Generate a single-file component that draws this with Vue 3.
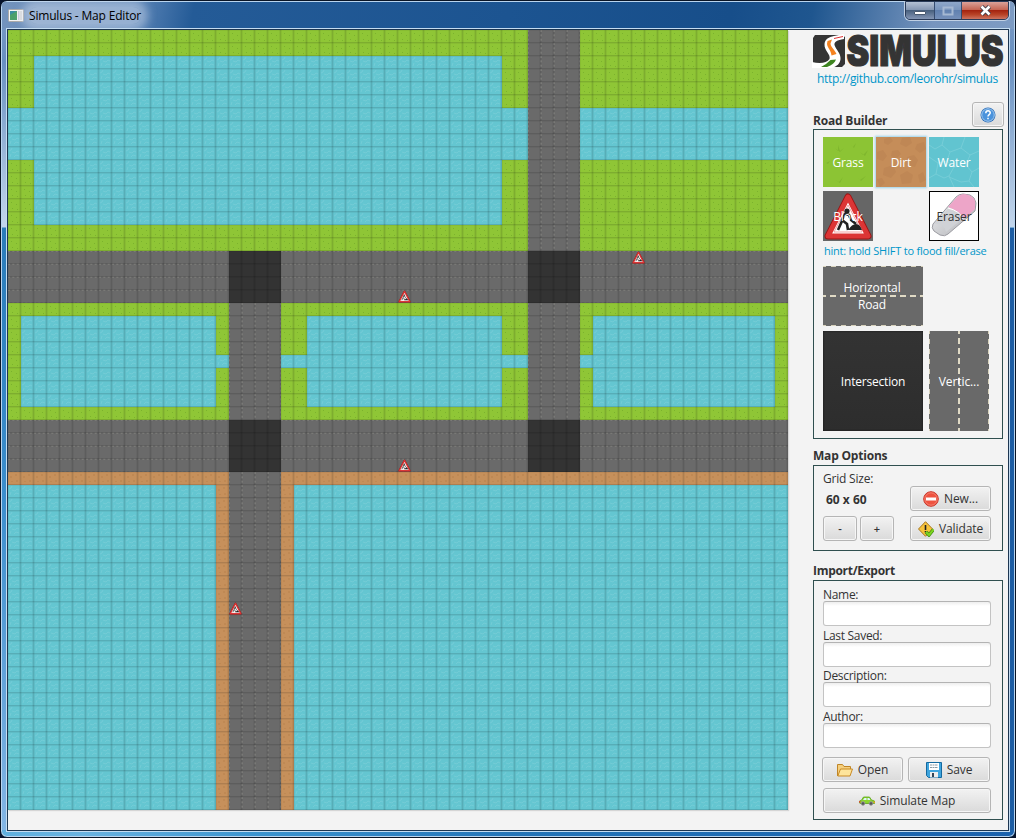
<script setup>
const T = 13
const areas = [
  ['grass', 0, 0, 60, 34],
  ['water', 2, 2, 36, 13],
  ['water', 0, 6, 60, 4],
  ['water', 1, 22, 15, 7],
  ['water', 23, 22, 15, 7],
  ['water', 45, 22, 14, 7],
  ['water', 16, 25, 29, 1],
  ['water', 0, 34, 60, 26],
  ['dirt', 0, 34, 60, 1],
  ['dirt', 16, 35, 1, 25],
  ['dirt', 21, 35, 1, 25],
  ['roadv', 40, 0, 4, 34],
  ['roadv', 17, 21, 4, 39],
  ['roadh', 0, 17, 60, 4],
  ['roadh', 0, 30, 60, 4],
  ['cross', 17, 17, 4, 4],
  ['cross', 40, 17, 4, 4],
  ['cross', 17, 30, 4, 4],
  ['cross', 40, 30, 4, 4],
]
const blocks = [[30, 20], [48, 17], [30, 33], [17, 44]]
const fields = ['Name:', 'Last Saved:', 'Description:', 'Author:']
</script>

<template>
  <div class="window">
    <header class="titlebar">
      <svg class="appicon" width="16" height="13" viewBox="0 0 16 13">
        <rect x=".5" y=".5" width="15" height="12" rx="1" fill="#f4f4f4" stroke="#a9a9a9" />
        <rect x="2" y="2" width="7" height="9" fill="#3b8fa0" />
        <path d="M2 11V6l7-4v9z" fill="#4ba06b" />
        <rect x="10" y="2" width="1.5" height="9" fill="#ccd" />
        <rect x="12" y="2" width="2" height="9" fill="#ddd" />
      </svg>
      <span class="title">Simulus - Map Editor</span>
      <div class="controls">
        <span class="ctl min"><svg width="12" height="6"><rect x=".5" y="1.5" width="11" height="3" rx=".5" fill="#fff" stroke="#4a5a70" /></svg></span>
        <span class="ctl max"><svg width="12" height="10"><rect x="1.5" y="1.5" width="9" height="7" fill="none" stroke="#a5b8d2" stroke-width="2" /></svg></span>
        <span class="ctl close"><svg width="13" height="11" viewBox="0 0 13 11"><path d="M2.5 1.5l8 8M10.5 1.5l-8 8" stroke="#3d3d49" stroke-width="4.4" /><path d="M2.5 1.5l8 8M10.5 1.5l-8 8" stroke="#fff" stroke-width="2.6" /></svg></span>
      </div>
    </header>

    <main class="client">
      <svg class="map" width="780" height="780" viewBox="0 0 780 780">
        <defs>
          <pattern id="grass" :width="T" :height="T" patternUnits="userSpaceOnUse">
            <rect width="13" height="13" fill="#8fc636" />
            <path d="M3 3.500h1M8 5.500h1M4 9.500h1M9 10.500h1" stroke="#7bb22d" fill="none" />
          </pattern>
          <pattern id="water" :width="T" :height="T" patternUnits="userSpaceOnUse">
            <rect width="13" height="13" fill="#64c6d1" />
            <path d="M1 4l2-1 1-2M4 5l3 1 2-2 2 1M2 10l1-3M6 10l2-2 3 1" stroke="#7dced8" stroke-width=".6" fill="none" />
          </pattern>
          <pattern id="dirt" :width="T" :height="T" patternUnits="userSpaceOnUse">
            <rect width="13" height="13" fill="#c6905b" />
            <path d="M2 4h2v2H2zM7 2h2v2H7zM8 8h2v2H8zM3 9h2v1H3z" fill="#bf8954" />
          </pattern>
          <pattern id="roadh" :width="T" :height="T" patternUnits="userSpaceOnUse">
            <rect width="13" height="13" fill="#6a6a6a" />
            <path d="M0 .5h13" stroke="#8a8a86" stroke-dasharray="2 2.33" opacity=".65" />
            <path d="M0 12.5h13" stroke="#787876" stroke-dasharray="2 2.33" opacity=".6" />
          </pattern>
          <pattern id="roadv" :width="T" :height="T" patternUnits="userSpaceOnUse">
            <rect width="13" height="13" fill="#6a6a6a" />
            <path d="M.5 0v13" stroke="#8a8a86" stroke-dasharray="2 2.33" opacity=".65" />
            <path d="M12.5 0v13" stroke="#888886" stroke-dasharray="2 2.33" opacity=".6" />
          </pattern>
          <pattern id="cross" :width="T" :height="T" patternUnits="userSpaceOnUse">
            <rect width="13" height="13" fill="#333" />
          </pattern>
          <pattern id="grid" :width="T" :height="T" patternUnits="userSpaceOnUse">
            <path d="M12.5 0v13M0 12.5h13" stroke="#000" stroke-opacity=".125" />
            <path d="M11.5 0v13M.5 0v13M0 .5h13" stroke="#000" stroke-opacity=".05" />
          </pattern>
          <symbol id="sign" viewBox="0 0 50 50">
            <path d="M25 6L45 45H5z" fill="#ddd" stroke="#9a1515" stroke-width="7" stroke-linejoin="round" />
            <path d="M25 6L45 45H5z" fill="#fff" stroke="#dc3535" stroke-width="5" stroke-linejoin="round" />
            <path d="M25 14L39 41H11z" fill="#fff" stroke="#f3a3a3" stroke-width="1" stroke-linejoin="round" />
            <circle cx="24" cy="20" r="2.6" fill="#222" />
            <path d="M21 23l5 1 2 5 5 4M22 23l-3 6 5 4 1 6M19 30l-4 9" fill="none" stroke="#222" stroke-width="2.600" />
            <path d="M25 39q4-6 8-6t6 6z" fill="#222" />
          </symbol>
        </defs>
        <rect v-for="(a, i) in areas" :key="i" :x="a[1] * T" :y="a[2] * T" :width="a[3] * T" :height="a[4] * T" :fill="`url(#${a[0]})`" />
        <rect width="780" height="780" fill="url(#grid)" />
        <use v-for="(b, i) in blocks" :key="'b' + i" href="#sign" :x="b[0] * T" :y="b[1] * T" width="13" height="13" />
      </svg>

      <aside class="side">
        <svg class="logo" width="193" height="34" viewBox="0 0 193 34">
          <path d="M3 1H30L33 3V30L30 33H3L1 31V4z" fill="#343434" />
          <path d="M22 2L32 0V5C25 6 22 8 22.500 11C24 16 29 19 28.500 25C28 30 25 32 20 34H0V28C8 30 15 29 17.500 25C19 20 12 17 12.500 10C13 5 17 3 22 2z" fill="#fff" />
          <path d="M15.500 7L20 5.500 18.500 9.500C18.500 13 23 16 24.500 20L19.500 21.500C19 16 15.500 14 15 10z" fill="#f5821f" />
          <path d="M14 30L18.500 26 24 25.500C23 29 20 31 15 33H9z" fill="#3d8420" />
          <path d="M22 4.500L31 2.500" stroke="#d33" stroke-width="1" />
          <text x="34.500" y="32" textLength="157" lengthAdjust="spacingAndGlyphs">SIMULUS</text>
        </svg>
        <a class="link">http://github.com/leorohr/simulus</a>

        <div class="head">
          <h2>Road Builder</h2>
          <button class="btn help">
            <svg width="16" height="16" viewBox="0 0 16 16"><circle cx="8" cy="8" r="7.5" fill="#2a6db8" /><circle cx="8" cy="8" r="6.3" fill="#4b93dc" stroke="#b4d6f5" stroke-width=".9" /><path d="M5.8 6.2C5.8 3 10.4 3.2 10.2 6C10.1 7.6 8 7.6 8 9.4M8 10.8v1.5" fill="none" stroke="#fff" stroke-width="1.5" /></svg>
          </button>
        </div>
        <section class="box builder">
          <div class="tiles">
            <button class="tile grass">
              <svg class="tex" width="50" height="50"><path d="M12 11l3 3V8l2 6 4-3-4 4zM27 7l3 3 3-4-2 5zM37 15l3 3 5-5-3 6zM12 43l4 2 4-5-3 6zM34 40l3 3 6-4-5 5zM3 26l2 1 2-3z" fill="#7fb62e" /></svg>
              <span>Grass</span>
            </button>
            <button class="tile dirt">
              <svg class="tex" width="50" height="50"><g fill="#bf8755"><path d="M8 2l6-2 3 4-5 4-4-2zM26 1l8-1 2 6-6 4-6-3zM41 7l7-2 2 7-6 4-5-4zM1 15l6-2 4 6-4 5-6-2zM16 14l6-1 3 4-5 5-5-3zM31 20l7-2 4 5-3 7-8-2zM8 31l9-3 3 7-5 6-8-3zM24 38l7-4 6 4-2 8-9 1zM42 38l5-3 3 8-6 3zM1 42l5-1 3 5-5 4z" /></g></svg>
              <span>Dirt</span>
            </button>
            <button class="tile water">
              <svg class="tex" width="50" height="50"><path d="M0 8l6 4 7-4 2-8M13 8l8 7-3 9-9 2-9-6M21 15l11-4 4-11M32 11l9 7 9-4M41 18l-4 10-12 2-7-6M25 30l-5 9 5 11M37 28l6 7-3 9 5 6M43 35l7-4M9 26l-2 11 8 4 5-2M7 37l-7 4M20 40l12 5 8-1" fill="none" stroke="#76cdd7" stroke-width="1" /></svg>
              <span>Water</span>
            </button>
            <button class="tile block">
              <svg class="tex" width="50" height="50"><use href="#sign" width="50" height="50" /></svg>
              <span>Block</span>
            </button>
            <i></i>
            <button class="tile eraser">
              <svg class="tex" width="50" height="50" viewBox="0 0 50 50">
                <defs><linearGradient id="er" x1="0" y1="0" x2="1" y2="1"><stop offset="0" stop-color="#f2f2f4" /><stop offset="1" stop-color="#aeb0b4" /></linearGradient></defs>
                <path d="M4 33L27 6Q30 3 34 3L41 4Q46 6 47 12L46 20 19 43Q16 46 11 44L5 40Q2 37 4 33z" fill="url(#er)" stroke="#9c9ca2" />
                <path d="M19 16L29 5Q32 3 36 3L42 5Q47 8 46 13L46 18 35 28Q31 20 19 16z" fill="#eda5c8" />
                <path d="M5 33L19 18Q31 21 33 28L17 41Q15 32 5 33z" fill="#d0d2d6" />
                <path d="M19 17Q31 20 34 28" fill="none" stroke="#fff" />
              </svg>
              <span>Eraser</span>
            </button>
          </div>
          <p class="hint">hint: hold SHIFT to flood fill/erase</p>
          <button class="tile hroad">
            <svg class="tex" width="100" height="60"><path d="M0 .5h100M0 59.500h100" stroke="#d9d3bd" stroke-dasharray="5 5" stroke-dashoffset="2" /><path d="M0 30h100" stroke="#e0dac5" stroke-width="2" stroke-dasharray="6 4" stroke-dashoffset="3" /></svg>
            <span>Horizontal<br>Road</span>
          </button>
          <div class="roads">
            <button class="tile inter"><span>Intersection</span></button>
            <button class="tile vroad">
              <svg class="tex" width="60" height="100"><path d="M.5 0v100M59.500 0v100" stroke="#d9d3bd" stroke-dasharray="5 5" stroke-dashoffset="2" /><path d="M30 0v100" stroke="#e0dac5" stroke-width="2" stroke-dasharray="6 4" stroke-dashoffset="3" /></svg>
              <span>Vertic...</span>
            </button>
          </div>
        </section>

        <h2 class="h-options">Map Options</h2>
        <section class="box options">
          <div class="size">
            <label>Grid Size:</label>
            <b>60 x 60</b>
            <div class="pm"><button class="btn">-</button><button class="btn">+</button></div>
          </div>
          <div class="acts">
            <button class="btn">
              <svg width="16" height="16" viewBox="0 0 16 16"><circle cx="8" cy="8" r="7.3" fill="#ee5340" stroke="#c93429" /><circle cx="8" cy="8" r="6.2" fill="none" stroke="#f79283" stroke-width=".7" /><rect x="3" y="6.500" width="10" height="3" fill="#fff" /></svg>
              <span class="t-new">New...</span>
            </button>
            <button class="btn">
              <svg width="16" height="16" viewBox="0 0 16 16"><path d="M7.500 .7L14.600 8 7.500 15.300 .5 8z" fill="#f7c33c" stroke="#a8771e" /><path d="M7.500 4v5M7.500 10v1.500" stroke="#222" stroke-width="1.600" /><path d="M8 11l3 3 4.500-5.500" fill="none" stroke="#3b8c10" stroke-width="3.400" /><path d="M8 11l3 3 4.500-5.500" fill="none" stroke="#7ed321" stroke-width="2" /></svg>
              <span class="t-val">Validate</span>
            </button>
          </div>
        </section>

        <h2 class="h-io">Import/Export</h2>
        <section class="box io">
          <div v-for="f in fields" :key="f" class="field"><label>{{ f }}</label><input type="text"></div>
          <div class="files">
            <button class="btn">
              <svg width="16" height="14" viewBox="0 0 16 14"><path d="M.5 13V1.500h5l1.500 2h6.500V6" fill="#f5cf7e" stroke="#bf8527" /><path d="M.8 13L3.500 6H15.500L13 13z" fill="#fde49b" stroke="#c98a24" /></svg>
              <span class="t-open">Open</span>
            </button>
            <button class="btn">
              <svg width="16" height="16" viewBox="0 0 16 16"><path d="M.5 .5h15v15h-13l-2-2z" fill="#3ea4dd" stroke="#14699f" /><rect x="3" y="1" width="10" height="7" fill="#fff" /><path d="M4 3h8M4 5.500h8" stroke="#8a9aa5" stroke-dasharray="2 .5" /><rect x="4" y="10" width="8" height="5.500" fill="#eee" /><rect x="6" y="11" width="2" height="4" fill="#345" /></svg>
              <span class="t-save">Save</span>
            </button>
          </div>
          <button class="btn simulate">
            <svg width="16" height="10" viewBox="0 0 16 10"><path d="M.5 7V5l2-.8L4.500 1h6l2 3 3 1V7.500H1z" fill="#8bd52e" stroke="#5aa315" stroke-width=".8" /><path d="M4 4l1.500-2h2v2zM8.500 2h1.700l1.200 2H8.500z" fill="#dff3ff" /><circle cx="4" cy="7.500" r="1.800" fill="#555" stroke="#999" /><circle cx="12" cy="7.500" r="1.800" fill="#555" stroke="#999" /><rect x="0" y="5" width="1.500" height="1.500" fill="#d43" /><rect x="14.500" y="5.500" width="1.500" height="1.500" fill="#e92" /></svg>
            <span class="t-sim">Simulate Map</span>
          </button>
        </section>
      </aside>
    </main>
  </div>
</template>

<style>
body { background: #06122b; }
</style>

<style scoped>
* { box-sizing: border-box; }
.window {
  width: 1016px; height: 838px; display: flex; flex-direction: column;
  font-family: "Open Sans", "Noto Sans", sans-serif; font-size: 12px; color: #333;
  border: 1px solid #0a1526; border-radius: 7px; overflow: hidden;
  background: linear-gradient(90deg, #5fb0de, #6ab3e0 8%, #3b94cf 25%, #2475b8 50%, #1b62ad) 0 829px no-repeat,
    linear-gradient(90deg, transparent 50%, #1c5da3 50%) 0 227px no-repeat,
    linear-gradient(#7e9cc4, #6890c1 60px, #c3d6ec 226px, #2b7cb9 227px, #3c8ecd 500px, #85b6e5 838px);
  box-shadow: inset 0 0 0 1px #b9d4ee;
}
.titlebar {
  height: 27px; margin: 1px 1px 0; flex: none; display: flex; align-items: flex-start; padding: 5px 6px 0;
  background: linear-gradient(100deg, #7393bd 0, #5d86b8 130px, #245b97 190px, #1c5491 500px, #174e8a 720px, #1f568f 800px, #7795be 920px, #7e9cc4 1010px);
}
.appicon { margin-top: 2px; }
.title {
  margin-left: 5px; line-height: 17px; color: #000; white-space: nowrap; letter-spacing: -.18px;
  background: rgba(205, 217, 236, .5); box-shadow: 0 0 9px 7px rgba(205, 217, 236, .5); border-radius: 8px;
}
.controls { display: flex; margin: -6px -1px 0 auto; height: 19px; border: 1px solid #2a3b58; border-radius: 0 0 5px 5px; overflow: hidden; box-shadow: 0 0 0 1px #c0d0e4; }
.ctl { display: flex; align-items: center; justify-content: center; border-left: 1px solid #354c70; }
.min { width: 28px; border-left: 0; padding-top: 4px; background: linear-gradient(#b4c1d4, #8395b0 48%, #49617f 50%, #8496b5); }
.max { width: 27px; background: linear-gradient(#8fa8ca, #7894bc 48%, #6181b0 50%, #7590ba); }
.close { width: 47px; background: linear-gradient(#daa299, #c4624f 48%, #a42410 50%, #b94428 75%, #cc7461); }
.client {
  display: flex; width: 1002px; height: 802px; margin-left: 6px; flex: none; background: #f3f3f3;
  border: 1px solid #1d3651; box-shadow: 0 0 0 1px #c4dcf1;
}
.map { display: block; flex: none; box-shadow: 1px 1px 1px #d5d5d5; }
.side { flex: none; width: 220px; padding: 4px 5px 0 25px; display: flex; flex-direction: column; }
.logo { display: block; flex: none; margin-left: -1px; overflow: visible; }
.logo text { font-family: Inter, sans-serif; font-weight: 900; font-size: 42px; fill: #343434; stroke: #343434; stroke-width: 1.2px; }
.link, .hint { color: #0096c9; white-space: nowrap; }
.link { margin: 2px 0 0 4px; height: 17px; line-height: 17px; letter-spacing: -.33px; }
h2 { margin: 0; font-size: 12px; line-height: 16px; height: 16px; font-weight: 700; white-space: nowrap; color: #333; letter-spacing: -.2px; }
.head { display: flex; justify-content: space-between; align-items: flex-end; height: 42px; flex: none; }
.head .help { width: 32px; height: 25px; margin: 0 -1px 2px 0; }
.box { border: 1px solid #2f4f4f; width: 190px; flex: none; }
.btn {
  display: flex; align-items: center; justify-content: center; gap: 5px; padding: 0; height: 25px; margin: 0;
  border: 1px solid #b5b5b5; border-radius: 3px; background: linear-gradient(#f2f2f2, #dadada); box-shadow: inset 0 0 0 1px #f6f6f6;
  font: inherit; line-height: 16px; color: #333; white-space: nowrap;
}
.btn span { letter-spacing: -.1px; }
.tile { position: relative; border: 0; padding: 0; margin: 0; color: #fff; font: inherit; line-height: 17px; display: flex; align-items: center; justify-content: center; }
.tile span { position: relative; letter-spacing: -.1px; }
.tile.inter span { letter-spacing: -.2px; }
.tex { position: absolute; left: 0; top: 0; }
.builder { height: 310px; padding: 7px 0 0 9px; }
.tiles { display: grid; grid-template-columns: 50px 50px 50px; column-gap: 3px; row-gap: 4px; grid-auto-rows: 50px; }
.grass { background: #8cc434; }
.dirt { background: #c58d59; box-shadow: 0 0 2px 1px #9bd2ea; }
.water { background: #61c4d0; }
.block { background: #666; }
.eraser { background: #fff; color: #333; box-shadow: inset 0 0 0 1px #000; }
.hint { margin: 1px 0 0 1px; height: 17px; line-height: 17px; font-size: 11px; letter-spacing: -.22px; }
.hroad { width: 100px; height: 60px; margin-top: 7px; background: #696969; }
.hroad span { left: -1px; }
.roads { display: flex; gap: 6px; margin-top: 5px; }
.inter { width: 100px; height: 100px; background: linear-gradient(#333, #2d2d2d); box-shadow: inset 0 0 2px #111; }
.vroad { width: 60px; height: 100px; background: #696969; }
.h-options { margin-top: 9px; }
.options { height: 86px; margin-top: 1px; display: flex; justify-content: space-between; padding: 5px 11px 0 9px; }
.size { display: flex; flex-direction: column; }
.size label { line-height: 16px; letter-spacing: -.2px; }
.size b { line-height: 16px; margin: 5px 0 0 3px; }
.pm { display: flex; gap: 3px; margin-top: 8px; }
.pm .btn { width: 34px; font-size: 11px; font-weight: 600; }
.acts { display: flex; flex-direction: column; gap: 5px; padding-top: 15px; }
.acts .btn { width: 81px; }
.h-io { margin-top: 12px; letter-spacing: -.3px; }
.io { height: 240px; margin-top: 1px; padding: 6px 10px 0 9px; }
.field { height: 40.6px; }
.field label { display: block; height: 14px; line-height: 16px; letter-spacing: -.3px; }
.field input { display: block; width: 168px; height: 25px; margin: 0; padding: 0; border: 1px solid #c3c3c3; border-top-color: #b3b3b3; border-radius: 3px; background: linear-gradient(#eee, #fff 4px); outline: 0; }
.files { display: flex; gap: 5px; margin: 8px 0 0 -1px; }
.files .btn { width: 81px; }
.files .btn + .btn { width: 82px; }
.simulate { width: 168px; margin-top: 6px; }
</style>
